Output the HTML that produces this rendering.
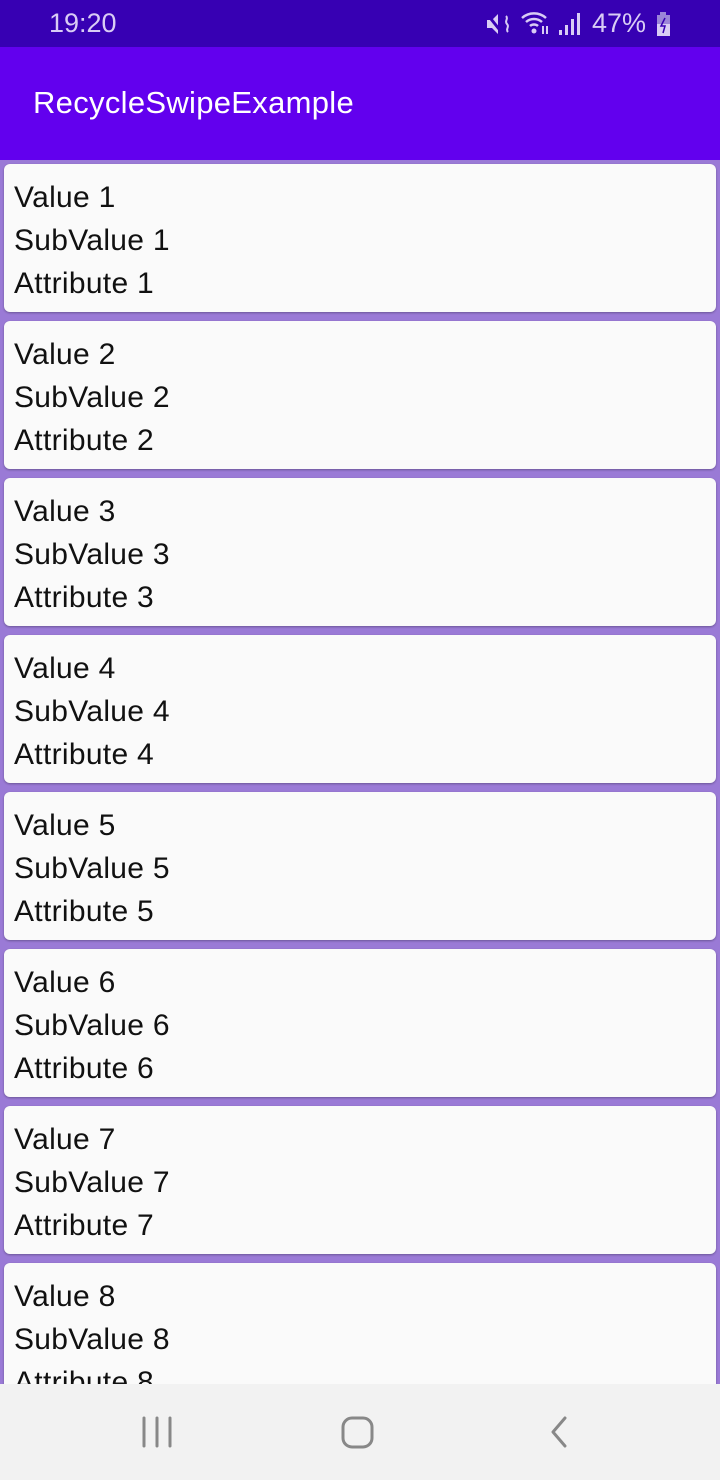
<!DOCTYPE html>
<html><head><style>
body{margin:0;width:720px;height:1480px;overflow:hidden;background:#9a7ad6;font-family:"Liberation Sans",sans-serif;position:relative}
.sb{position:absolute;left:0;top:0;width:720px;height:47px;background:#3700b3;color:#d9ccf5}
.ab{position:absolute;left:0;top:47px;width:720px;height:113px;background:#6200ee}
.ab span{position:absolute;left:33px;top:38px;color:#fff;font-size:31px;letter-spacing:0.3px}
.card{position:absolute;left:4px;width:712px;height:148px;background:#fafafa;border-radius:6px;box-shadow:0 1px 2px rgba(0,0,0,.3)}
.card div{position:absolute;left:10px;font-size:30px;color:#111;letter-spacing:0.3px}
.nav{position:absolute;left:0;top:1384px;width:720px;height:96px;background:#f2f2f2}
</style></head><body>
<div class="sb"><span style="position:absolute;left:49px;top:8px;font-size:27px">19:20</span>
<svg style="position:absolute;left:485px;top:12px" width="30" height="24" viewBox="0 0 30 24"><path d="M2 8h5l6-6v20l-6-6H2z" fill="#d9ccf5"/><path d="M2 2l16 20" stroke="#3700b3" stroke-width="3"/><path d="M21 4c3 3-2 5 1 8s-2 5 1 8" stroke="#d9ccf5" stroke-width="2" fill="none"/></svg>
<svg style="position:absolute;left:520px;top:10px" width="32" height="26" viewBox="0 0 32 26"><path d="M2 8a18 18 0 0 1 24 0M6 12a12 12 0 0 1 16 0M10 16a6 6 0 0 1 8 0" stroke="#d9ccf5" stroke-width="2.5" fill="none"/><circle cx="14" cy="21" r="2.5" fill="#d9ccf5"/><path d="M23 16v8M27 24v-8" stroke="#d9ccf5" stroke-width="2"/></svg>
<svg style="position:absolute;left:557px;top:12px" width="26" height="24" viewBox="0 0 26 24"><rect x="2" y="18" width="3" height="5" fill="#d9ccf5"/><rect x="8" y="13" width="3" height="10" fill="#d9ccf5"/><rect x="14" y="7" width="3" height="16" fill="#d9ccf5"/><rect x="20" y="1" width="3" height="22" fill="#d9ccf5"/></svg>
<span style="position:absolute;left:592px;top:8px;font-size:27px">47%</span>
<svg style="position:absolute;left:654px;top:12px" width="20" height="24" viewBox="0 0 20 24"><rect x="6" y="0" width="6" height="3" fill="#9b84d8"/><rect x="3" y="3" width="13" height="21" fill="#9b84d8"/><rect x="3" y="12" width="13" height="12" fill="#d9ccf5"/><path d="M11 6l-4 8h4l-2 7" stroke="#3700b3" stroke-width="1.5" fill="none"/></svg>
</div>
<div class="ab"><span>RecycleSwipeExample</span></div>
<div class="card" style="top:164px"><div style="top:17px">Value 1</div><div style="top:60px">SubValue 1</div><div style="top:103px">Attribute 1</div></div>
<div class="card" style="top:321px"><div style="top:17px">Value 2</div><div style="top:60px">SubValue 2</div><div style="top:103px">Attribute 2</div></div>
<div class="card" style="top:478px"><div style="top:17px">Value 3</div><div style="top:60px">SubValue 3</div><div style="top:103px">Attribute 3</div></div>
<div class="card" style="top:635px"><div style="top:17px">Value 4</div><div style="top:60px">SubValue 4</div><div style="top:103px">Attribute 4</div></div>
<div class="card" style="top:792px"><div style="top:17px">Value 5</div><div style="top:60px">SubValue 5</div><div style="top:103px">Attribute 5</div></div>
<div class="card" style="top:949px"><div style="top:17px">Value 6</div><div style="top:60px">SubValue 6</div><div style="top:103px">Attribute 6</div></div>
<div class="card" style="top:1106px"><div style="top:17px">Value 7</div><div style="top:60px">SubValue 7</div><div style="top:103px">Attribute 7</div></div>
<div class="card" style="top:1263px"><div style="top:17px">Value 8</div><div style="top:60px">SubValue 8</div><div style="top:103px">Attribute 8</div></div>
<div class="nav">
<svg style="position:absolute;left:140px;top:32px" width="36" height="32" viewBox="0 0 36 32"><path d="M4 2v28M17 2v28M30 2v28" stroke="#888" stroke-width="3" stroke-linecap="round"/></svg>
<svg style="position:absolute;left:340px;top:32px" width="36" height="34" viewBox="0 0 36 34"><rect x="3" y="2" width="29" height="29" rx="9" stroke="#888" stroke-width="3" fill="none"/></svg>
<svg style="position:absolute;left:546px;top:32px" width="28" height="32" viewBox="0 0 28 32"><path d="M19 2L7 16l12 14" stroke="#888" stroke-width="3" fill="none" stroke-linecap="round" stroke-linejoin="round"/></svg>
</div>
</body></html>
